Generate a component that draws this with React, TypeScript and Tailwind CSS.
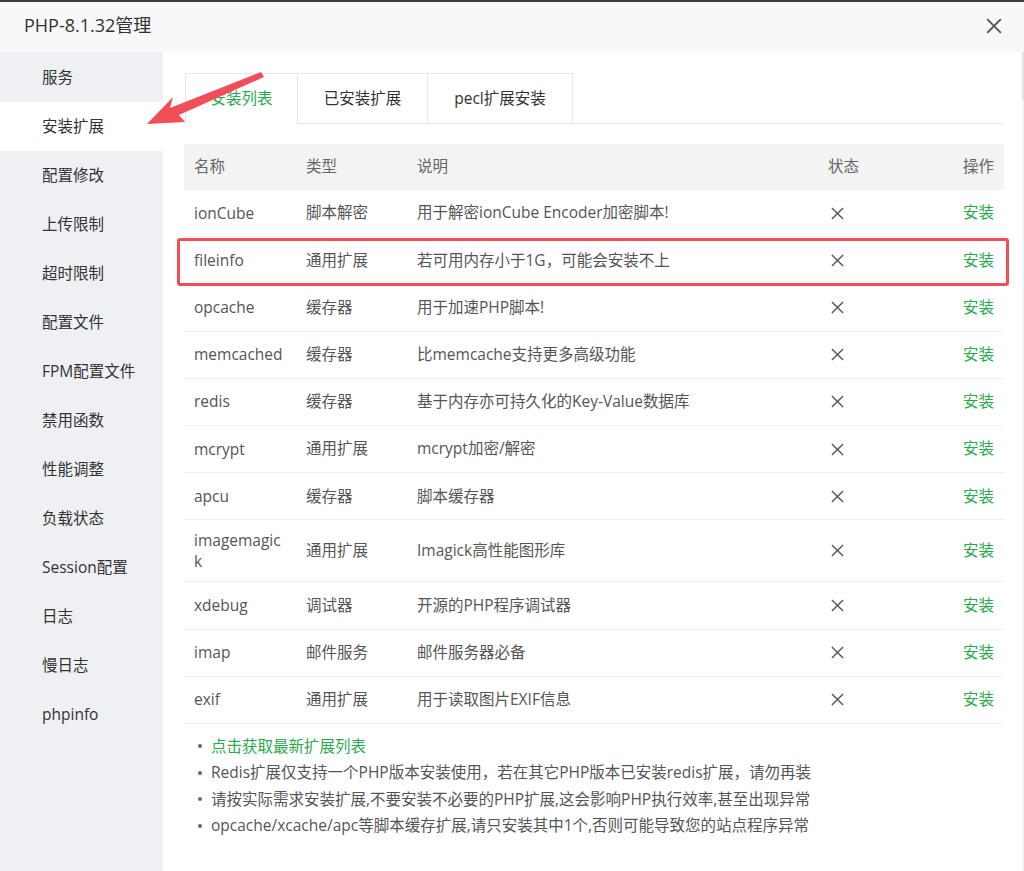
import React from "react";

const menu = ["服务","安装扩展","配置修改","上传限制","超时限制","配置文件","FPM配置文件","禁用函数","性能调整","负载状态","Session配置","日志","慢日志","phpinfo"];

const rows: [string,string,string][] = [
  ["ionCube","脚本解密","用于解密ionCube Encoder加密脚本!"],
  ["fileinfo","通用扩展","若可用内存小于1G，可能会安装不上"],
  ["opcache","缓存器","用于加速PHP脚本!"],
  ["memcached","缓存器","比memcache支持更多高级功能"],
  ["redis","缓存器","基于内存亦可持久化的Key-Value数据库"],
  ["mcrypt","通用扩展","mcrypt加密/解密"],
  ["apcu","缓存器","脚本缓存器"],
  ["imagemagick","通用扩展","Imagick高性能图形库"],
  ["xdebug","调试器","开源的PHP程序调试器"],
  ["imap","邮件服务","邮件服务器必备"],
  ["exif","通用扩展","用于读取图片EXIF信息"],
];

const tips = [
  "Redis扩展仅支持一个PHP版本安装使用，若在其它PHP版本已安装redis扩展，请勿再装",
  "请按实际需求安装扩展,不要安装不必要的PHP扩展,这会影响PHP执行效率,甚至出现异常",
  "opcache/xcache/apc等脚本缓存扩展,请只安装其中1个,否则可能导致您的站点程序异常",
];

function XIcon({ size = 14, stroke = "#555", w = 1.6 }: { size?: number; stroke?: string; w?: number }) {
  return (
    <svg width={size} height={size} viewBox="0 0 14 14">
      <path d="M1 1L13 13M13 1L1 13" stroke={stroke} strokeWidth={w} fill="none" />
    </svg>
  );
}

export default function App() {
  return (
    <div
      className="relative w-[1024px] h-[871px] flex flex-col bg-white overflow-hidden border-t-2 border-[#3c3c3c]"
      style={{ fontFamily: '"Open Sans", "Noto Sans CJK SC", sans-serif' }}
    >
      <div className="h-[50px] shrink-0 bg-[#f8f8f8] flex items-center justify-between pl-[24px] pr-[22px] pb-[3px]">
        <span className="text-[18px] text-[#333]">PHP-8.1.32管理</span>
        <XIcon size={16} stroke="#555" w={1.7} />
      </div>
      <div className="flex flex-1 min-h-0">
        <div className="w-[163px] shrink-0 bg-[#eff0f4] flex flex-col pt-[1px]">
          {menu.map((m, i) => (
            <div
              key={m}
              className={`h-[49px] flex items-center pl-[42px] text-[15.5px] text-[#333] ${i === 1 ? "bg-white" : ""}`}
            >
              {m}
            </div>
          ))}
        </div>
        <div className="flex-1 pl-[22px] pr-[18px] pt-[21px] flex flex-col">
          <div className="flex h-[51px] border-b border-[#e6e6e6]">
            <div className="w-[113px] border border-[#e6e6e6] border-b-0 bg-white -mb-px flex items-center justify-center text-[15.5px] text-[#2aaa4c]">安装列表</div>
            <div className="w-[130px] border-t border-r border-[#e6e6e6] flex items-center justify-center text-[15.5px] text-[#333]">已安装扩展</div>
            <div className="w-[145px] border-t border-r border-[#e6e6e6] flex items-center justify-center text-[15.5px] text-[#333]">pecl扩展安装</div>
          </div>
          <div className="mt-[20px] ml-[-1px] text-[15.5px]">
            <div className="flex h-[46px] items-center bg-[#f3f3f3] text-[#666]">
              <div className="w-[112px] pl-[10px]">名称</div>
              <div className="w-[111px] pl-[10px]">类型</div>
              <div className="flex-1 pl-[10px]">说明</div>
              <div className="w-[90px] pl-[4px]">状态</div>
              <div className="w-[90px] pr-[10px] text-right">操作</div>
            </div>
            {rows.map(([n, t, d]) => (
              <div key={n} className="flex min-h-[47.2px] py-[9.5px] items-center border-b border-[#f0f0f0] text-[#555]">
                <div className="w-[112px] pl-[10px] pr-[10px] break-all leading-[21px]">{n}</div>
                <div className="w-[111px] pl-[10px]">{t}</div>
                <div className="flex-1 pl-[10px]">{d}</div>
                <div className="w-[90px] pl-[7px] flex items-center"><XIcon size={13} stroke="#555" w={1.5} /></div>
                <div className="w-[90px] pr-[10px] text-right text-[#2aaa4c]">安装</div>
              </div>
            ))}
          </div>
          <ul className="mt-[9px] pl-[13px] text-[15.5px] text-[#555] leading-[26.5px]">
            <li className="flex items-center gap-[9px]"><span className="w-[4px] h-[4px] rounded-full bg-[#666]" /><span className="text-[#2aaa4c]">点击获取最新扩展列表</span></li>
            {tips.map((t) => (
              <li key={t} className="flex items-center gap-[9px]"><span className="w-[4px] h-[4px] rounded-full bg-[#666]" /><span>{t}</span></li>
            ))}
          </ul>
        </div>
        <div className="w-[2px] shrink-0 bg-[#f3f3f3] flex flex-col"><div className="h-[48px] bg-[#e2e2e2]" /></div>
      </div>
      <div className="absolute left-[177px] top-[236px] w-[832px] h-[48px] border-[3px] border-[#f24e57] rounded-[3px] pointer-events-none" />
      <svg className="absolute left-0 top-0 pointer-events-none" width="1024" height="871">
        <polygon
          points="147,122 173,95 170,106 261,70 264,75 179,113 185,120"
          fill="#f24e57"
        />
      </svg>
    </div>
  );
}
